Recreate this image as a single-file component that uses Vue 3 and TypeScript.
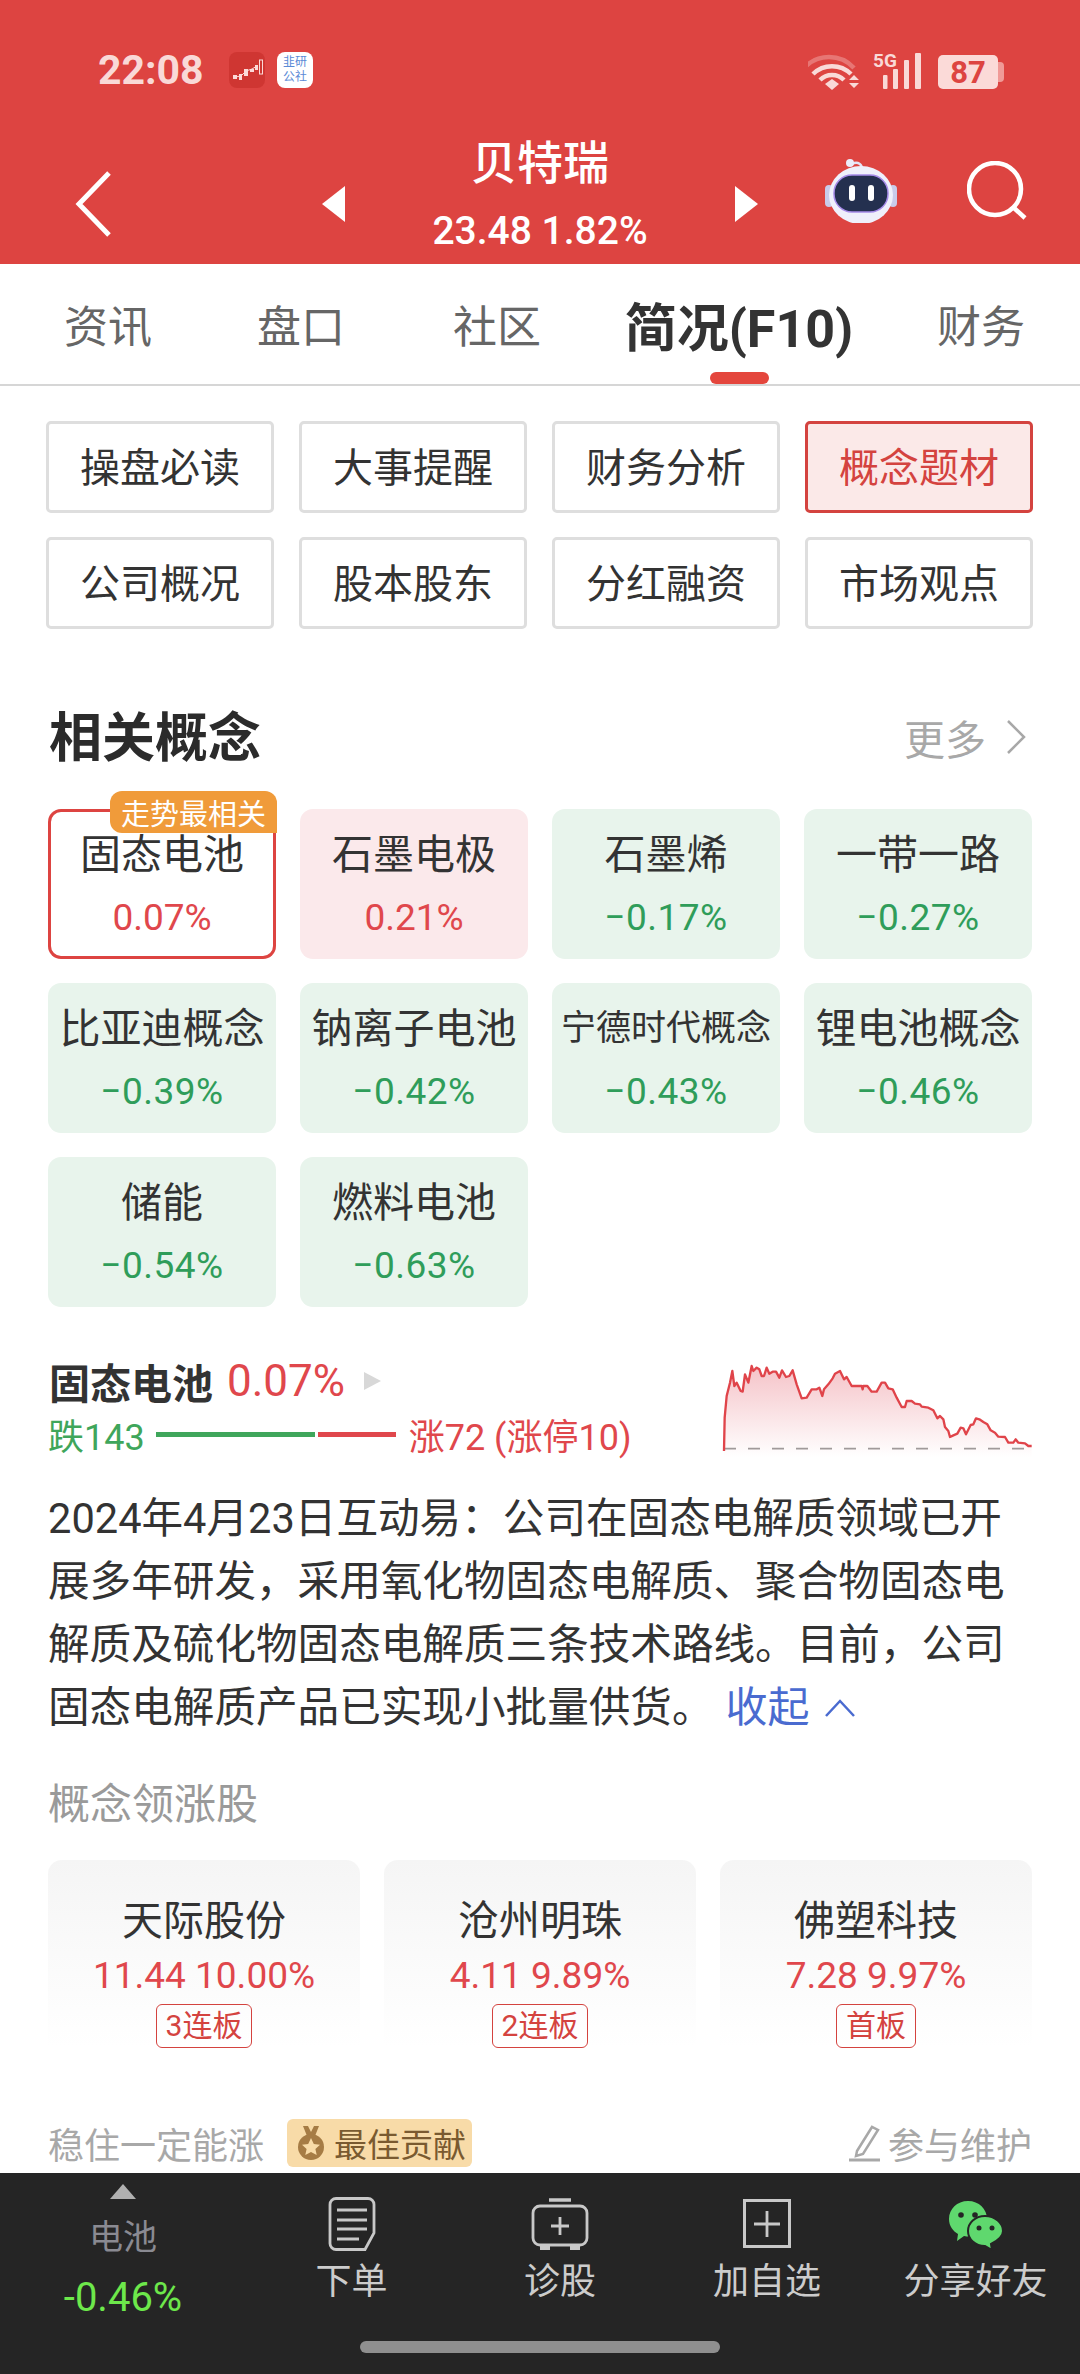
<script setup lang="ts">
interface Concept { name: string; pct: string; tone: 'up' | 'down' | 'top'; small?: boolean }
interface Leader { name: string; quote: string; tag: string }

const tabs: string[] = ['资讯', '盘口', '社区', '简况(F10)', '财务']
const menu: string[] = ['操盘必读', '大事提醒', '财务分析', '概念题材', '公司概况', '股本股东', '分红融资', '市场观点']
const concepts: Concept[] = [
  { name: '固态电池', pct: '0.07%', tone: 'top' },
  { name: '石墨电极', pct: '0.21%', tone: 'up' },
  { name: '石墨烯', pct: '−0.17%', tone: 'down' },
  { name: '一带一路', pct: '−0.27%', tone: 'down' },
  { name: '比亚迪概念', pct: '−0.39%', tone: 'down' },
  { name: '钠离子电池', pct: '−0.42%', tone: 'down' },
  { name: '宁德时代概念', pct: '−0.43%', tone: 'down', small: true },
  { name: '锂电池概念', pct: '−0.46%', tone: 'down' },
  { name: '储能', pct: '−0.54%', tone: 'down' },
  { name: '燃料电池', pct: '−0.63%', tone: 'down' },
]
const lines: string[] = [
  '2024年4月23日互动易\uFF1A公司在固态电解质领域已开',
  '展多年研发\uFF0C采用氧化物固态电解质、聚合物固态电',
  '解质及硫化物固态电解质三条技术路线。目前\uFF0C公司',
]
const leaders: Leader[] = [
  { name: '天际股份', quote: '11.44 10.00%', tag: '3连板' },
  { name: '沧州明珠', quote: '4.11 9.89%', tag: '2连板' },
  { name: '佛塑科技', quote: '7.28 9.97%', tag: '首板' },
]
const pts: number[][] = [[72,330],[74,230],[80,165],[90,125],[97,90],[103,135],[110,125],[122,150],[128,152],[135,100],[145,125],[155,75],[160,90],[170,80],[178,85],[185,105],[192,105],[200,80],[208,98],[218,92],[228,92],[238,110],[246,88],[258,108],[268,105],[278,88],[290,130],[305,172],[320,170],[335,145],[350,145],[358,140],[367,165],[372,145],[385,130],[398,112],[405,98],[420,90],[432,115],[440,108],[455,135],[485,135],[488,145],[490,135],[502,135],[515,152],[530,152],[545,125],[555,125],[565,142],[578,145],[590,170],[605,198],[615,198],[620,180],[635,180],[645,188],[660,190],[665,197],[685,200],[700,208],[712,232],[720,225],[730,235],[735,258],[745,270],[750,288],[760,283],[772,278],[782,260],[790,262],[798,280],[812,252],[820,250],[828,232],[838,235],[850,243],[862,250],[872,268],[885,275],[895,287],[915,288],[925,305],[940,305],[947,295],[955,305],[975,307],[985,315],[995,315]]
const linePath: string = pts.map((p, i) => `${i ? 'L' : 'M'}${p[0]} ${p[1]}`).join(' ')
const areaPath: string = `${linePath} L995 348 L72 348 Z`
</script>

<template>
  <div class="page">
    <header class="header">
      <div class="status">
        <span class="time">22:08</span>
        <svg class="app-icon" viewBox="0 0 36 36" width="36" height="36">
          <rect width="36" height="36" rx="8" fill="#CF3632" />
          <path d="M4 23h4v4H4zM10 22h3v6h-3zM15 17h4v7h-4zM21 17h4v3h-4zM26 13h3v5h-3z" fill="#FBDAD8" />
          <path d="M6 25l6-1 5-5 6-2 5-3" fill="none" stroke="#FBDAD8" stroke-width="1" />
          <rect x="30.500" y="8" width="3" height="14" fill="none" stroke="#FBDAD8" stroke-width="1" />
        </svg>
        <div class="app-note"><span>韭研</span><span>公社</span></div>
        <svg class="sys" viewBox="808 46 196 44" width="196" height="44">
          <path d="M804 66a34 34 0 0 1 50 0" fill="none" stroke="#F9D5D3" stroke-opacity=".35" stroke-width="4.500" />
          <path d="M813 72a27 27 0 0 1 38 0" fill="none" stroke="#F9D9D7" stroke-width="4.500" />
          <path d="M820 78a17 17 0 0 1 24 0" fill="none" stroke="#F9D9D7" stroke-width="4.500" />
          <path d="M825 82l7-5 7 5-7 6z" fill="#F9D9D7" />
          <path d="M849 78l5-5 5 5zM849 81h10l-5 5z" fill="#F9D9D7" />
          <text x="873" y="65" class="fiveg">5G</text>
          <rect x="883" y="73" width="4.500" height="14" rx="1" fill="#F9D9D7" />
          <rect x="893" y="67" width="5" height="20" rx="1" fill="#F9D9D7" />
          <rect x="904" y="58" width="5" height="29" rx="1" fill="#F9D9D7" />
          <rect x="915" y="51" width="6" height="36" rx="1" fill="#F9D9D7" />
          <rect x="938" y="53" width="60" height="34" rx="5" fill="#FBDAD8" />
          <path d="M998 60h2a4 4 0 0 1 4 4v12a4 4 0 0 1-4 4h-2z" fill="#F09A97" />
          <text x="968" y="81" class="batt">87</text>
        </svg>
      </div>
      <div class="nav">
        <div class="back-cell">
          <svg viewBox="0 0 40 68" width="40" height="68" class="back">
            <path d="M35 3L5 34l30 31" fill="none" stroke="#fff" stroke-width="5" />
          </svg>
        </div>
        <span class="tri tri-left"></span>
        <div class="nav-title">
          <div class="stock">贝特瑞</div>
          <div class="quote">23.48 1.82%</div>
        </div>
        <span class="tri tri-right"></span>
        <div class="nav-tools">
          <svg class="robot" viewBox="0 0 72 66" width="72" height="66">
            <path d="M27 7c6-3 10 0 11 7" fill="none" stroke="#E4E4F6" stroke-width="2.500" />
            <circle cx="25" cy="6" r="4" fill="#ECECFA" />
            <rect x="0" y="28" width="8" height="22" rx="4" fill="#C9CBEA" />
            <rect x="64" y="28" width="8" height="22" rx="4" fill="#C9CBEA" />
            <ellipse cx="36" cy="38" rx="32" ry="29" fill="#EFF0FB" />
            <rect x="9" y="18" width="54" height="37" rx="18" fill="#24304F" stroke="#A58AE8" stroke-width="1.500" />
            <rect x="24" y="28" width="6" height="16" rx="3" fill="#fff" />
            <rect x="43" y="28" width="6" height="16" rx="3" fill="#fff" />
          </svg>
          <svg class="search" viewBox="0 0 60 60" width="60" height="60">
            <circle cx="28" cy="28" r="26" fill="none" stroke="#fff" stroke-width="4.500" />
            <path d="M46 46l12 11" stroke="#fff" stroke-width="4.500" />
          </svg>
        </div>
      </div>
    </header>

    <nav class="tabs">
      <div v-for="(t, i) in tabs" :key="t" class="tab" :class="{ active: i === 3 }">
        {{ t }}<i v-if="i === 3" class="tab-mark"></i>
      </div>
    </nav>

    <main class="main">
      <section class="menu">
        <div v-for="(m, i) in menu" :key="m" class="menu-item" :class="{ on: i === 3 }">{{ m }}</div>
      </section>

      <section class="sec-head">
        <h2>相关概念</h2>
        <div class="more">更多
          <svg viewBox="0 0 22 36" width="22" height="36"><path d="M3 2l16 16L3 34" fill="none" stroke="#A8A8A8" stroke-width="2.500" /></svg>
        </div>
      </section>

      <section class="concepts">
        <div v-for="c in concepts" :key="c.name" class="concept" :class="c.tone">
          <span v-if="c.tone === 'top'" class="flag">走势最相关</span>
          <div class="c-name" :class="{ small: c.small }">{{ c.name }}</div>
          <div class="c-pct">{{ c.pct }}</div>
        </div>
      </section>

      <section class="detail">
        <div class="detail-left">
          <div class="d-title"><b>固态电池</b><span class="d-pct">0.07%</span><i class="d-tri"></i></div>
          <div class="d-breadth">
            <span class="fall">跌143</span>
            <i class="bar-g"></i><i class="bar-r"></i>
            <span class="rise">涨72 (涨停10)</span>
          </div>
        </div>
        <svg class="chart" viewBox="0 0 1020 420" width="340" height="140">
          <defs>
            <linearGradient id="areaFade" x1="0" y1="0" x2="0" y2="1">
              <stop offset="0" stop-color="#F5C3C8" />
              <stop offset="1" stop-color="#FFFFFF" />
            </linearGradient>
          </defs>
          <path :d="areaPath" fill="url(#areaFade)" />
          <path d="M72 323H995" stroke="#A09A9A" stroke-width="5" stroke-dasharray="36 36" fill="none" />
          <path :d="linePath" fill="none" stroke="#E0444A" stroke-width="7" stroke-linejoin="round" />
        </svg>
      </section>

      <section class="para">
        <div v-for="l in lines" :key="l" class="para-line">{{ l }}</div>
        <div class="para-line">固态电解质产品已实现小批量供货。<span class="fold">收起
          <svg viewBox="0 0 32 20" width="32" height="20"><path d="M2 18L16 3l14 15" fill="none" stroke="#4A6BD0" stroke-width="2.500" /></svg>
        </span></div>
      </section>

      <div class="leader-title">概念领涨股</div>
      <section class="leaders">
        <div v-for="s in leaders" :key="s.name" class="leader">
          <div class="l-name">{{ s.name }}</div>
          <div class="l-quote">{{ s.quote }}</div>
          <span class="l-tag">{{ s.tag }}</span>
        </div>
      </section>

      <section class="credit">
        <span class="author">稳住一定能涨</span>
        <span class="best">
          <svg viewBox="0 0 28 36" width="28" height="36">
            <path d="M6 1h5l3 6 3-6h5l-4 10h-8z" fill="#A67C45" />
            <circle cx="14" cy="22" r="13" fill="#A67C45" />
            <path d="M14 13l2.800 6 6.200.700-4.600 4.200 1.300 6.100-5.700-3.100-5.700 3.100 1.300-6.100L5 19.700l6.200-.700z" fill="#F8DBA8" />
          </svg>
          最佳贡献
        </span>
        <span class="join">
          <svg viewBox="0 0 34 38" width="34" height="38">
            <path d="M9 27L24 3l6 3-15 24-7 2z" fill="none" stroke="#A8A8A8" stroke-width="2.500" />
            <path d="M1 36h31" stroke="#A8A8A8" stroke-width="3" />
          </svg>
          参与维护
        </span>
      </section>
    </main>

    <footer class="bar">
      <div class="bar-row">
        <div class="bar-quote">
          <i class="up-tri"></i>
          <div class="bq-name">电池</div>
          <div class="bq-pct">-0.46%</div>
        </div>
        <div class="act">
          <svg viewBox="0 0 48 54" width="48" height="54">
            <path d="M8 1.500h32a6 6 0 0 1 6 6V36l-9 16.500H8a6 6 0 0 1-6-6v-39a6 6 0 0 1 6-6z" fill="none" stroke="#C8C8C8" stroke-width="2.800" />
            <path d="M9 14h30M9 24h30M9 33h30M9 43h22" stroke="#C8C8C8" stroke-width="3" transform="translate(0 -1)" />
          </svg>
          <span>下单</span>
        </div>
        <div class="act">
          <svg viewBox="0 0 58 54" width="58" height="54">
            <path d="M18 3h22" stroke="#C8C8C8" stroke-width="3.500" />
            <rect x="2" y="9" width="54" height="39" rx="7" fill="none" stroke="#C8C8C8" stroke-width="2.800" />
            <path d="M29 20v18M20 29h18" stroke="#C8C8C8" stroke-width="2.800" />
            <path d="M9 49h10v4H9zM39 49h10v4H39z" fill="#C8C8C8" />
          </svg>
          <span>诊股</span>
        </div>
        <div class="act">
          <svg viewBox="0 0 48 54" width="48" height="54">
            <rect x="1.500" y="3.500" width="45" height="46" fill="none" stroke="#C8C8C8" stroke-width="3" />
            <path d="M24 14v26M11 27h26" stroke="#C8C8C8" stroke-width="2.800" />
          </svg>
          <span>加自选</span>
        </div>
        <div class="act">
          <svg viewBox="0 0 56 54" width="56" height="54">
            <path d="M20 4C9 4 1 12 1 22c0 7 4 12 9 15l-1 7 7-5c2 .500 3 .500 5 .500C32 39.500 39 31 39 22 39 12 31 4 20 4z" fill="#5FD86E" />
            <path d="M37 19c-10 0-17 7-17 15s7 15 17 15l7 4-1-6c6-3 12-7 12-13 0-8-8-15-18-15z" fill="#5FD86E" stroke="#252525" stroke-width="2" />
            <circle cx="13" cy="18" r="2.800" fill="#252525" /><circle cx="27" cy="18" r="2.800" fill="#252525" />
            <circle cx="31" cy="31" r="2.500" fill="#252525" /><circle cx="44" cy="31" r="2.500" fill="#252525" />
          </svg>
          <span>分享好友</span>
        </div>
      </div>
      <div class="home"></div>
    </footer>
  </div>
</template>

<style>
html, body { margin: 0; padding: 0; background: #fff; }
</style>

<style scoped>
.page {
  width: 1080px;
  height: 2374px;
  display: flex;
  flex-direction: column;
  overflow: hidden;
  background: #fff;
  font-family: Roboto, "Noto Sans CJK SC", sans-serif;
  color: #333;
}
.header { height: 264px; background: #DD4441; flex: none; }
.status { display: flex; align-items: center; height: 40px; padding: 50px 76px 0 98px; }
.time { width: 131px; font-size: 41px; font-weight: 700; line-height: 40px; color: #F9D9D7; }
.app-note {
  width: 36px; height: 36px; margin-left: 12px; border-radius: 8px; background: #fff;
  display: flex; flex-direction: column; align-items: center; justify-content: center;
  font-size: 12px; line-height: 15px; color: #5B8AD6;
}
.sys { margin-left: auto; }
.fiveg { font-size: 19px; font-weight: 700; fill: #F9D9D7; font-family: Roboto, sans-serif; }
.batt { font-size: 31px; font-weight: 700; fill: #DD4441; text-anchor: middle; font-family: Roboto, sans-serif; }
.nav {
  height: 124px; margin-top: 50px;
  display: grid; grid-template-columns: 322px 23px 390px 23px 1fr; align-items: center;
}
.back-cell { padding-left: 74px; display: flex; height: 100%; align-items: center; }
.back { margin-top: 3px; }
.tri { width: 0; height: 0; border-top: 18px solid transparent; border-bottom: 18px solid transparent; margin-top: 4px; }
.tri-left { border-right: 23px solid #fff; }
.tri-right { border-left: 23px solid #fff; }
.nav-title { text-align: center; color: #fff; display: flex; flex-direction: column; margin-top: -10px; }
.stock { font-size: 46px; line-height: 46px; font-weight: 500; }
.quote { font-size: 39px; line-height: 46px; margin-top: 22px; font-weight: 500; }
.nav-tools { display: flex; align-items: flex-start; padding-left: 67px; height: 100%; }
.robot { margin-top: 17px; }
.search { margin-left: 70px; margin-top: 21px; }

.tabs {
  flex: none; height: 120px; border-bottom: 2px solid #D6D6D6;
  display: grid; grid-template-columns: 204px 194px 198px 286px 198px;
}
.tab { position: relative; display: flex; align-items: center; justify-content: center; font-size: 44px; color: #666; }
.tab:first-child { padding-left: 12px; }
.tab.active { font-size: 52px; font-weight: 700; color: #333; }
.tab-mark { position: absolute; left: 114px; bottom: 0; width: 59px; height: 12px; border-radius: 6px; background: #E4463D; }

.main { flex: 1; min-height: 0; overflow: hidden; }
.menu { display: grid; grid-template-columns: repeat(4, 228px); gap: 24px 25px; padding: 35px 46px 0; }
.menu-item {
  height: 92px; box-sizing: border-box; border: 3px solid #DEDEDE; border-radius: 5px; padding-bottom: 5px;
  display: flex; align-items: center; justify-content: center; font-size: 40px; color: #333;
}
.menu-item.on { border-color: #D4433F; background: #FBE9E8; color: #D4433F; }

.sec-head { display: flex; align-items: center; justify-content: space-between; height: 60px; margin-top: 80px; padding: 0 53px 0 49px; }
.sec-head h2 { margin: 0; font-size: 53px; line-height: 60px; font-weight: 700; color: #2B2B2B; }
.more { display: flex; align-items: center; gap: 19px; font-size: 41px; color: #A8A8A8; margin-top: -4px; }

.concepts { display: grid; grid-template-columns: repeat(4, 228px); grid-auto-rows: 150px; gap: 24px; padding: 40px 48px 0; }
.concept { position: relative; border-radius: 13px; text-align: center; padding-top: 21px; box-sizing: border-box; }
.concept.up { background: #FBE9EB; }
.concept.down { background: #E8F4EC; }
.concept.top { box-shadow: inset 0 0 0 3px #DD4441; }
.c-name { font-size: 41px; line-height: 50px; color: #333; white-space: nowrap; }
.c-name.small { font-size: 35px; }
.c-pct { margin-top: 18px; font-size: 37px; line-height: 40px; }
.up .c-pct, .top .c-pct { color: #E0474C; }
.down .c-pct { color: #2F9D5A; letter-spacing: .5px; }
.flag {
  position: absolute; right: -1px; top: -18px; width: 167px; height: 42px;
  display: flex; align-items: center; justify-content: center;
  background: #F09B3A; color: #fff; font-size: 29px; white-space: nowrap;
  border-radius: 12px 12px 0 12px;
}

.detail { display: flex; justify-content: space-between; height: 140px; margin-top: 34px; padding: 0 40px 0 49px; }
.detail-left { padding-top: 18px; }
.d-title { display: flex; align-items: center; height: 44px; font-size: 41px; }
.d-title b { font-weight: 700; color: #333; }
.d-pct { margin-left: 14px; color: #E0474C; font-size: 44px; }
.d-tri { margin-left: 19px; width: 0; height: 0; border-left: 17px solid #D8D8D8; border-top: 9px solid transparent; border-bottom: 9px solid transparent; }
.d-breadth { display: flex; align-items: center; height: 44px; margin-top: 9px; font-size: 36px; margin-left: -1px; }
.fall { color: #3FA65B; }
.rise { color: #E0474C; margin-left: 13px; }
.bar-g { width: 159px; height: 5px; margin-left: 11px; background: #3FA65B; }
.bar-r { width: 78px; height: 5px; margin-left: 3px; background: #E0474C; }

.para { margin-top: 6px; padding-left: 48px; font-size: 41.6px; line-height: 63px; color: #333; }
.para-line { white-space: nowrap; }
.fold { color: #4A6BD0; display: inline-flex; align-items: center; gap: 14px; margin-left: 12px; font-size: 42px; }

.leader-title { margin-top: 41px; padding-left: 48px; font-size: 42px; line-height: 50px; color: #9A9A9A; }
.leaders { display: grid; grid-template-columns: repeat(3, 312px); gap: 24px; padding: 30px 48px 0; }
.leader {
  height: 188px; box-sizing: border-box; padding-top: 36px; border-radius: 14px 14px 0 0; text-align: center;
  background: linear-gradient(#F5F5F5, #FFFFFF);
}
.l-name { font-size: 41px; line-height: 50px; color: #333; }
.l-quote { margin-top: 8px; font-size: 37px; line-height: 44px; color: #E0474C; }
.l-tag {
  display: inline-block; margin-top: 6px; height: 44px; line-height: 42px; box-sizing: border-box;
  padding: 0 9px; border: 1px solid #D4433F; border-radius: 6px; font-size: 30px; color: #D4433F;
}

.credit { display: flex; align-items: center; height: 48px; margin-top: 71px; padding: 0 48px; }
.author { font-size: 36px; color: #A8A8A8; }
.best {
  display: flex; align-items: center; gap: 9px; height: 48px; margin-left: 23px; padding: 0 6px 0 10px;
  background: #F8DBA8; border-radius: 6px; font-size: 33px; color: #7A5A30;
}
.join { display: flex; align-items: center; gap: 6px; margin-left: auto; font-size: 36px; color: #A8A8A8; }

.bar { flex: none; height: 201px; background: #252525; display: flex; flex-direction: column; }
.bar-row { height: 168px; display: grid; grid-template-columns: 246px 211px 206px 208px 209px; }
.bar-quote { display: flex; flex-direction: column; align-items: center; padding-top: 11px; }
.up-tri { width: 0; height: 0; border-left: 13px solid transparent; border-right: 13px solid transparent; border-bottom: 15px solid #B0B0B0; }
.bq-name { margin-top: 13px; font-size: 34px; line-height: 50px; color: #8A8A92; }
.bq-pct { margin-top: 11px; font-size: 40px; line-height: 50px; color: #6DE84B; }
.act { display: flex; flex-direction: column; align-items: center; padding-top: 24px; }
.act span { margin-top: 9px; font-size: 36px; line-height: 44px; color: #CCCCCC; white-space: nowrap; }
.home { width: 360px; height: 12px; margin: 0 auto; border-radius: 6px; background: #8F8F8F; }
</style>
